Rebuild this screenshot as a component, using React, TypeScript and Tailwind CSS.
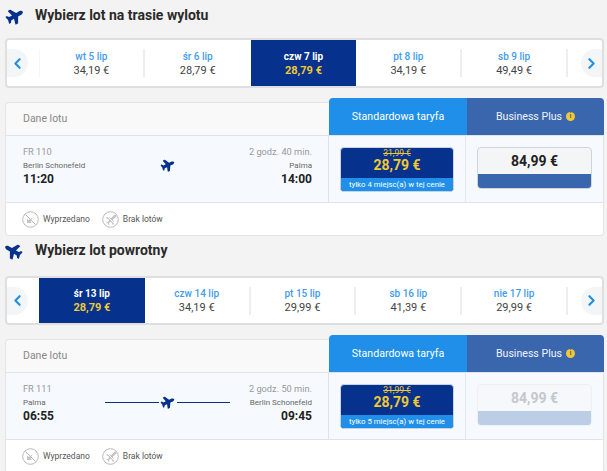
import { ChevronLeft, ChevronRight } from "lucide-react";
import { FaPlane } from "react-icons/fa";

const outbound = [
  { day: "wt 5 lip", price: "34,19 €" },
  { day: "śr 6 lip", price: "28,79 €" },
  { day: "czw 7 lip", price: "28,79 €", active: true },
  { day: "pt 8 lip", price: "34,19 €" },
  { day: "sb 9 lip", price: "49,49 €" },
];

const inbound = [
  { day: "śr 13 lip", price: "28,79 €", active: true },
  { day: "czw 14 lip", price: "34,19 €" },
  { day: "pt 15 lip", price: "29,99 €" },
  { day: "sb 16 lip", price: "41,39 €" },
  { day: "nie 17 lip", price: "29,99 €" },
];

function DateStrip({ items, h }: { items: { day: string; price: string; active?: boolean }[]; h: string }) {
  return (
    <div className={`mr-[3px] ml-[5px] flex items-center rounded border-2 border-[#dfdfdf] bg-white ${h}`}>
      <div className="flex h-7 w-[21px] items-center justify-center rounded-r-full bg-[#f4f5f7] text-[#1e90e8]">
        <ChevronLeft size={17} strokeWidth={3} />
      </div>
      <div className="ml-[11px] flex h-full w-[529px]">
        {items.map((d, i) => (
          <div
            key={d.day}
            className={`flex h-full w-[105.8px] items-center justify-center ${d.active ? "bg-[#06318c]" : ""}`}
          >
            <div
              className={`flex h-7 w-full flex-col items-center justify-center ${
                !d.active && !items[i + 1]?.active ? "border-r-2 border-[#eeeeee]" : ""
              } ${i === 0 && !d.active ? "border-l border-l-[#f6f6f6]" : ""}`}
            >
              <span
                className={`text-[10px] leading-[15px] ${d.active ? "font-bold text-white" : "font-medium text-[#3f9cf0]"}`}
              >
                {d.day}
              </span>
              <span className={`text-[11px] leading-[14px] ${d.active ? "font-bold text-[#f1c933]" : "text-[#444444]"}`}>
                {d.price}
              </span>
            </div>
          </div>
        ))}
      </div>
      <div className="ml-auto flex h-7 w-[21px] items-center justify-center rounded-l-full bg-[#f4f5f7] text-[#1e90e8]">
        <ChevronRight size={17} strokeWidth={3} />
      </div>
    </div>
  );
}

const smallPlane =
  "M12.5 3.5 9.5 7 5 6l-1 1 3.5 2-1.5 2-1.5-.3-.5.5 1.7 1.1 1.1 1.7.5-.5L7 12l2-1.5 2 3.5 1-1-1-4.5 3.5-3c.5-1-.5-2-2-1.5Z";

function SoldOutIcon() {
  return (
    <svg width="17" height="17" viewBox="0 0 17 17" fill="none" stroke="#b9b9b9">
      <circle cx="8.5" cy="8.5" r="7.8" />
      <path d="M3.5 3.5 13.5 13.5" />
      <path d="M5 12V7.5l1.5 1.5 4-2.5-2 4 1.5 1.5Z" fill="#c4c4c4" stroke="none" />
    </svg>
  );
}

function NoFlightIcon() {
  return (
    <svg width="17" height="17" viewBox="0 0 17 17" fill="none" stroke="#b9b9b9">
      <circle cx="8.5" cy="8.5" r="7.8" />
      <path d={smallPlane} fill="#c4c4c4" stroke="none" />
      <path d="M4 4 13 13" stroke="#ffffff" />
    </svg>
  );
}

type FlightProps = {
  no: string;
  duration: string;
  from: string;
  to: string;
  dep: string;
  arr: string;
  seats: string;
  line?: boolean;
  dimmed?: boolean;
};

function FlightCard({ no, duration, from, to, dep, arr, seats, line, dimmed }: FlightProps) {
  return (
    <div className="mr-[3px] ml-[5px]">
      <div className="flex items-end">
        <div className="flex h-[33px] w-[324px] items-center rounded-tl border-t border-l border-[#e4e4e4] bg-[#f9f9f9] pl-[17px] text-[10.5px] text-[#888888]">
          Dane lotu
        </div>
        <div className="flex h-[37px] w-[138px] items-center justify-center rounded-tl bg-[#1f8fea] text-[10.6px] text-white">
          Standardowa taryfa
        </div>
        <div className="flex h-[37px] w-[137px] items-center justify-center gap-1 rounded-tr bg-[#3a66ae] text-[10.6px] text-[#f2f5fb]">
          Business Plus
          <span className="flex h-[9px] w-[9px] items-center justify-center rounded-full bg-[#f1c933] text-[7px] leading-none font-bold text-[#3a66ae]">
            i
          </span>
        </div>
      </div>
      <div className="flex h-[68px] border-y border-[#dfe3ea] border-r border-r-[#e4e4e4] border-l border-l-[#e4e4e4] bg-[#f6faff]">
        <div className="flex w-[323px] flex-col border-r border-[#dfe3ea] pt-[10px] pr-[16px] pl-[17px]">
          <div className="flex justify-between text-[9.25px] leading-[12px] text-[#999999]">
            <span>{no}</span>
            <span>{duration}</span>
          </div>
          <div className="relative flex items-end justify-between">
            <div className="flex flex-col">
              <span className="mt-[3px] text-[8px] leading-[10px] text-[#666666]">{from}</span>
              <span className="text-[12px] leading-[17px] font-bold text-[#222222]">{dep}</span>
            </div>
            <div className="absolute top-0 left-[82px] flex w-[125px] items-center justify-center">
              {line && <div className="h-px flex-1 bg-[#06318c]" />}
              <FaPlane size={14} className="mx-[2px] -rotate-[25deg] text-[#06318c]" />
              {line && <div className="h-px flex-1 bg-[#06318c]" />}
            </div>
            <div className="flex flex-col items-end">
              <span className="mt-[3px] text-[8px] leading-[10px] text-[#666666]">{to}</span>
              <span className="text-[12px] leading-[17px] font-bold text-[#222222]">{arr}</span>
            </div>
          </div>
        </div>
        <div className="flex w-[137px] items-start justify-center border-r border-[#e4e7ec] pt-[11px]">
          <div className="flex h-[45px] w-[114px] flex-col overflow-hidden rounded-sm border border-[#c9d3e2] bg-[#06318c]">
            <span className="mt-[1px] text-center text-[8.5px] leading-[9px] text-[#f1c933] line-through">31,99 €</span>
            <span className="text-center text-[14px] leading-[14px] font-bold text-[#f1c933]">28,79 €</span>
            <span className="mt-auto bg-[#1f8fea] py-px text-center text-[7.8px] leading-[11px] text-white">{seats}</span>
          </div>
        </div>
        <div className="flex flex-1 items-start justify-center pt-[11px]">
          <div
            className={`flex h-[42px] w-[115px] flex-col overflow-hidden rounded-sm border ${
              dimmed ? "border-[#eef0f4] bg-[#f6f8fc]" : "border-[#cfd4dc] bg-[#f4f5f7]"
            }`}
          >
            <span
              className={`flex flex-1 items-center justify-center text-[14px] font-bold ${
                dimmed ? "text-[#c4c7cc]" : "text-[#222222]"
              }`}
            >
              84,99 €
            </span>
            <span className={`h-[14px] ${dimmed ? "bg-[#bccde6]" : "bg-[#3a66ae]"}`} />
          </div>
        </div>
      </div>
      <div className="flex h-[33px] items-center gap-[12px] rounded-b border-x border-b border-[#e4e4e4] bg-white pl-[16px] text-[8.5px] text-[#555555]">
        <span className="flex items-center gap-[4px]">
          <SoldOutIcon />
          Wyprzedano
        </span>
        <span className="flex items-center gap-[4px]">
          <NoFlightIcon />
          Brak lotów
        </span>
      </div>
    </div>
  );
}

export default function App() {
  return (
    <div className="h-[471px] overflow-hidden bg-[#f3f3f3] font-['Roboto',sans-serif]">
      <div className="flex h-[38px] items-start pt-[6px] pl-[6px]">
        <FaPlane size={18} className="mt-[1px] -rotate-[30deg] text-[#06318c]" />
        <h2 className="ml-[11px] text-[14px] leading-[18px] font-bold text-[#2a2a2a]">Wybierz lot na trasie wylotu</h2>
      </div>
      <DateStrip items={outbound} h="h-[50px]" />
      <div className="h-[10px]" />
      <FlightCard
        no="FR 110"
        duration="2 godz. 40 min."
        from="Berlin Schonefeld"
        to="Palma"
        dep="11:20"
        arr="14:00"
        seats="tylko 4 miejsc(a) w tej cenie"
      />
      <div className="flex h-[40px] items-start pt-[5px] pl-[4px]">
        <FaPlane size={18} className="mt-[1px] rotate-[30deg] -scale-x-100 text-[#06318c]" />
        <h2 className="ml-[13px] text-[14px] leading-[18px] font-bold text-[#2a2a2a]">Wybierz lot powrotny</h2>
      </div>
      <DateStrip items={inbound} h="h-[49px]" />
      <div className="h-[10px]" />
      <FlightCard
        no="FR 111"
        duration="2 godz. 50 min."
        from="Palma"
        to="Berlin Schonefeld"
        dep="06:55"
        arr="09:45"
        seats="tylko 5 miejsc(a) w tej cenie"
        line
        dimmed
      />
    </div>
  );
}
